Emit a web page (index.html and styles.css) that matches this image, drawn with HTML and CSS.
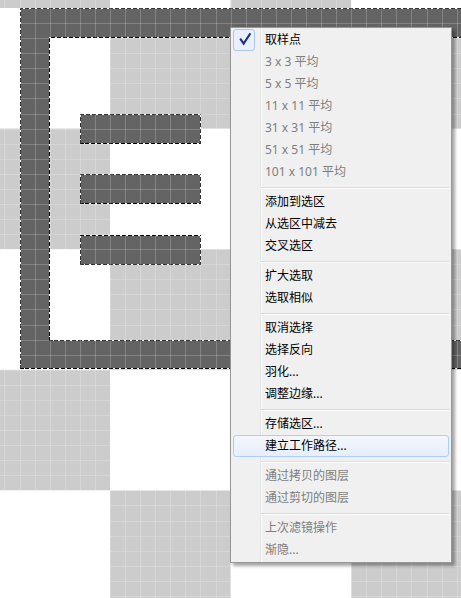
FILE: index.html
```html
<!DOCTYPE html>
<html lang="zh-CN">
<head>
<meta charset="utf-8">
<title>选区菜单</title>
<link rel="stylesheet" href="styles.css">
</head>
<body>
<div class="canvas">
  <div class="frame"><div class="hole ants"></div></div>
  <div class="bar bar-1 ants"></div>
  <div class="bar bar-2 ants"></div>
  <div class="bar bar-3 ants"></div>
  <div class="grid"></div>

  <div class="menu">
    <div class="item checked"><span class="icon"><svg width="22" height="22" viewBox="0 0 22 22"><path d="M7.2 9.6 L10.6 14.6 L17.4 4.4" fill="none" stroke="#1d2a8e" stroke-width="2" stroke-linejoin="miter" stroke-linecap="butt"/></svg></span><span class="label">取样点</span></div>
    <div class="item disabled"><span class="icon"></span><span class="label">3 x 3 平均</span></div>
    <div class="item disabled"><span class="icon"></span><span class="label">5 x 5 平均</span></div>
    <div class="item disabled"><span class="icon"></span><span class="label">11 x 11 平均</span></div>
    <div class="item disabled"><span class="icon"></span><span class="label">31 x 31 平均</span></div>
    <div class="item disabled"><span class="icon"></span><span class="label">51 x 51 平均</span></div>
    <div class="item disabled"><span class="icon"></span><span class="label">101 x 101 平均</span></div>
    <div class="sep"></div>
    <div class="item"><span class="icon"></span><span class="label">添加到选区</span></div>
    <div class="item"><span class="icon"></span><span class="label">从选区中减去</span></div>
    <div class="item"><span class="icon"></span><span class="label">交叉选区</span></div>
    <div class="sep"></div>
    <div class="item"><span class="icon"></span><span class="label">扩大选取</span></div>
    <div class="item"><span class="icon"></span><span class="label">选取相似</span></div>
    <div class="sep"></div>
    <div class="item"><span class="icon"></span><span class="label">取消选择</span></div>
    <div class="item"><span class="icon"></span><span class="label">选择反向</span></div>
    <div class="item"><span class="icon"></span><span class="label">羽化...</span></div>
    <div class="item"><span class="icon"></span><span class="label">调整边缘...</span></div>
    <div class="sep"></div>
    <div class="item"><span class="icon"></span><span class="label">存储选区...</span></div>
    <div class="item hover"><span class="icon"></span><span class="label">建立工作路径...</span></div>
    <div class="sep"></div>
    <div class="item disabled"><span class="icon"></span><span class="label">通过拷贝的图层</span></div>
    <div class="item disabled"><span class="icon"></span><span class="label">通过剪切的图层</span></div>
    <div class="sep"></div>
    <div class="item disabled"><span class="icon"></span><span class="label">上次滤镜操作</span></div>
    <div class="item disabled"><span class="icon"></span><span class="label">渐隐...</span></div>
  </div>
</div>
</body>
</html>
```

FILE: styles.css
```css
html, body {
  margin: 0;
  padding: 0;
  overflow: hidden;
}

.canvas {
  position: relative;
  width: 461px;
  height: 598px;
  overflow: hidden;
  background: conic-gradient(#fff 0 25%, #cccccc 0 50%, #fff 0 75%, #cccccc 0) 110px 8px / 241.2px 241.2px;
  font-family: "Noto Sans", "Noto Sans CJK SC", sans-serif;
}

/* marching ants */
.ants::after {
  content: "";
  position: absolute;
  inset: 0;
  border: 1px solid transparent;
  border-image: repeating-linear-gradient(45deg, #000 0 2.83px, #fff 2.83px 4.24px) 1;
}

.frame {
  position: absolute;
  left: 20px;
  top: 8px;
  width: 480px;
  height: 361px;
  box-sizing: border-box;
  border: 30px solid #646464;
  border-bottom-width: 29px;
}

.frame::before {
  content: "";
  position: absolute;
  top: -30px;
  left: -30px;
  right: -30px;
  bottom: -29px;
  border: 1px solid transparent;
  border-image: repeating-linear-gradient(45deg, #000 0 2.83px, #fff 2.83px 4.24px) 1;
}

.hole {
  position: absolute;
  inset: -1px;
}

.bar {
  position: absolute;
  left: 80px;
  width: 121px;
  height: 30px;
  background: #646464;
}

.bar-1 { top: 114px; }
.bar-2 { top: 174px; }
.bar-3 { top: 235px; }

.grid {
  position: absolute;
  inset: 0;
  pointer-events: none;
  background:
    repeating-linear-gradient(90deg, transparent 0 4.475px, rgba(255,255,255,0.2) 4.475px 5.475px, transparent 5.475px 15.075px),
    repeating-linear-gradient(180deg, transparent 0 8px, rgba(255,255,255,0.2) 8px 9px, transparent 9px 15.075px);
}

/* context menu */
.menu {
  position: absolute;
  left: 230px;
  top: 27px;
  width: 222px;
  box-sizing: border-box;
  padding: 1px 2px;
  border: 1px solid #979797;
  background:
    linear-gradient(90deg, transparent 29px, #e2e3e3 29px 30px, #ffffff 30px 31px, transparent 31px),
    #f0f0f0;
  box-shadow: 3px 3px 3px rgba(0, 0, 0, 0.35);
  font-size: 12px;
  color: #000;
}

.item {
  display: grid;
  grid-template-columns: 22px 1fr;
  column-gap: 10px;
  align-items: center;
  height: 22px;
  box-sizing: border-box;
  border: 1px solid transparent;
  border-radius: 3px;
  line-height: 20px;
  white-space: nowrap;
}

.item .icon {
  display: block;
  width: 22px;
  height: 22px;
  margin: -1px 0 0 -1px;
  box-sizing: border-box;
}

.item .label {
  margin-left: -1px;
  position: relative;
  top: -1px;
}

.item.checked .icon {
  border: 1px solid #a8c8ee;
  border-radius: 3px;
  background: #e9f0fb;
}

.item.checked .icon svg {
  display: block;
  margin: -1px;
}

.item.disabled {
  color: #7d7d7d;
}

.item.hover {
  border-color: #aecff5;
  background: linear-gradient(#f3f7fc, #e6eef9);
}

.sep {
  height: 8px;
  margin-left: 27px;
  position: relative;
}

.sep::after {
  content: "";
  position: absolute;
  left: 0;
  right: 0;
  top: 4px;
  height: 1px;
  background: #dcdcdc;
  box-shadow: 0 1px 0 #ffffff;
}
```
